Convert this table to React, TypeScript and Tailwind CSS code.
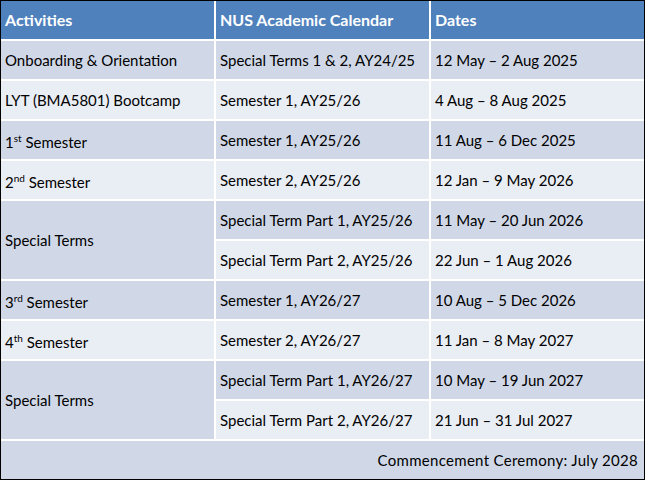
import React from 'react';

type Row = {
  activity?: React.ReactNode;
  span?: number;
  calendar: string;
  dates: string;
  dark: boolean;
};

const ord = (n: string, suf: string) => (
  <span className="relative top-[2px]">
    {n}
    <sup className="text-[10px] relative -top-[6px] align-baseline">{suf}</sup> Semester
  </span>
);

const rows: Row[] = [
  { activity: 'Onboarding & Orientation', calendar: 'Special Terms 1 & 2, AY24/25', dates: '12 May – 2 Aug 2025', dark: true },
  { activity: 'LYT (BMA5801) Bootcamp', calendar: 'Semester 1, AY25/26', dates: '4 Aug – 8 Aug 2025', dark: false },
  { activity: ord('1', 'st'), calendar: 'Semester 1, AY25/26', dates: '11 Aug – 6 Dec 2025', dark: true },
  { activity: ord('2', 'nd'), calendar: 'Semester 2, AY25/26', dates: '12 Jan – 9 May 2026', dark: false },
  { activity: 'Special Terms', span: 2, calendar: 'Special Term Part 1, AY25/26', dates: '11 May – 20 Jun 2026', dark: true },
  { calendar: 'Special Term Part 2, AY25/26', dates: '22 Jun – 1 Aug 2026', dark: false },
  { activity: ord('3', 'rd'), calendar: 'Semester 1, AY26/27', dates: '10 Aug – 5 Dec 2026', dark: true },
  { activity: ord('4', 'th'), calendar: 'Semester 2, AY26/27', dates: '11 Jan – 8 May 2027', dark: false },
  { activity: 'Special Terms', span: 2, calendar: 'Special Term Part 1, AY26/27', dates: '10 May – 19 Jun 2027', dark: true },
  { calendar: 'Special Term Part 2, AY26/27', dates: '21 Jun – 31 Jul 2027', dark: false },
];

function Cell({ children, dark, className = '' }: { children?: React.ReactNode; dark: boolean; className?: string }) {
  return (
    <div className={`flex items-center pl-[4px] ${dark ? 'bg-[#d0d8e8]' : 'bg-[#e9edf4]'} ${className}`}>
      <span>{children}</span>
    </div>
  );
}

export default function App() {
  return (
    <div className="w-[646px] h-[481px] bg-white" style={{ fontFamily: 'Lato, "Open Sans", sans-serif' }}>
      <div className="w-[645px] border border-black bg-white text-[15px] text-black leading-none">
        <div className="grid grid-cols-[213px_213px_213px] auto-rows-[38px] gap-[2px]">
          <div className="bg-[#4f81bd] text-white font-bold text-[16px] flex items-center pl-[4px]">Activities</div>
          <div className="bg-[#4f81bd] text-white font-bold text-[16px] flex items-center pl-[4px]">NUS Academic Calendar</div>
          <div className="bg-[#4f81bd] text-white font-bold text-[16px] flex items-center pl-[4px]">Dates</div>

          {rows.map((r, i) => (
            <React.Fragment key={i}>
              {r.activity !== undefined && (
                <Cell dark={r.dark} className={r.span === 2 ? 'row-span-2' : ''}>
                  {r.activity}
                </Cell>
              )}
              <Cell dark={r.dark}>{r.calendar}</Cell>
              <Cell dark={r.dark}>{r.dates}</Cell>
            </React.Fragment>
          ))}

          <div className="col-span-3 bg-[#d0d8e8] flex items-center justify-end pr-[6px]">
            <span className="tracking-[0.3px]">Commencement Ceremony: July 2028</span>
          </div>
        </div>
      </div>
    </div>
  );
}
